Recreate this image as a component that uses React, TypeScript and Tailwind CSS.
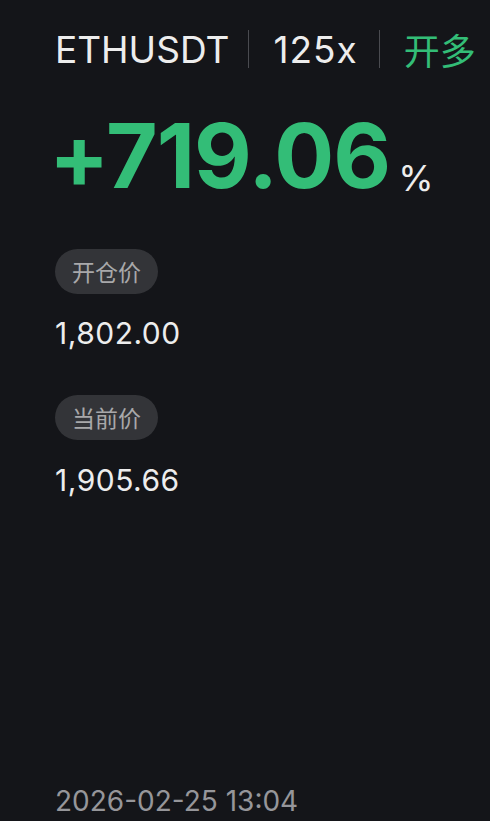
export default function App() {
  return (
    <div className="w-[490px] h-[821px] bg-[#141519] overflow-hidden flex flex-col pl-[55px] font-['Inter','Noto_Sans_CJK_SC',sans-serif]">
      <div className="flex items-center mt-[27px] h-[44px] whitespace-nowrap">
        <span className="text-[37px] leading-none text-[#ededed]">ETHUSDT</span>
        <span className="ml-[19px] mr-[24px] w-px h-[38px] bg-[#4a4b50] shrink-0" />
        <span className="text-[37px] leading-none text-[#ededed] tracking-[1px]">125x</span>
        <span className="ml-[21px] mr-[24px] w-px h-[38px] bg-[#4a4b50] shrink-0" />
        <span className="shrink-0 text-[36px] leading-none text-[#33bd77] font-['Noto_Sans_CJK_SC',sans-serif]">开多</span>
      </div>

      <div className="flex items-end mt-[40px] -ml-[6px] whitespace-nowrap">
        <span className="text-[89px] leading-none font-bold text-[#33bd77] tracking-[-1px]">+719.06</span>
        <span className="ml-[8px] mb-[4px] text-[36px] leading-none text-[#ededed]">%</span>
      </div>

      <div className="mt-[49px] self-start h-[45px] px-[17px] rounded-full bg-[#333438] flex items-center text-[23px] text-[#a8a8aa] font-['Noto_Sans_CJK_SC',sans-serif]">
        开仓价
      </div>
      <div className="mt-[24px] text-[30px] leading-none text-[#ededed] tracking-[0.5px]">1,802.00</div>

      <div className="mt-[47px] self-start h-[45px] px-[17px] rounded-full bg-[#333438] flex items-center text-[23px] text-[#a8a8aa] font-['Noto_Sans_CJK_SC',sans-serif]">
        当前价
      </div>
      <div className="mt-[25px] text-[30px] leading-none text-[#ededed] tracking-[0.5px]">1,905.66</div>

      <div className="mt-auto mb-[6px] text-[28px] leading-none text-[#96969a]">2026-02-25 13:04</div>
    </div>
  );
}
